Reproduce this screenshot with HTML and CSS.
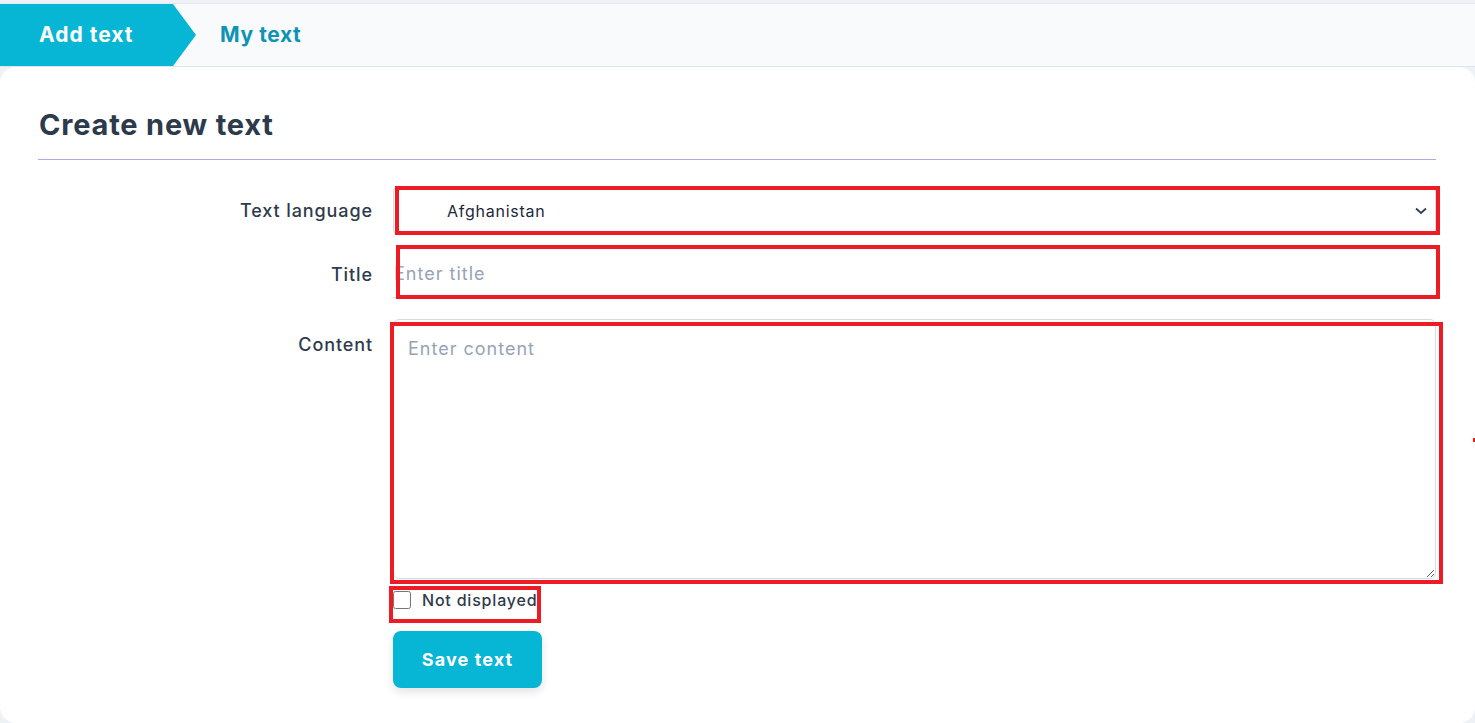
FILE: index.html
```html
<!DOCTYPE html>
<html lang="en">
<head>
<meta charset="utf-8">
<title>Create new text</title>
<link rel="stylesheet" href="styles.css">
</head>
<body>
<nav class="tabs">
  <a class="tab tab-active">Add text</a>
  <a class="tab tab-link">My text</a>
</nav>
<main class="card">
  <h1 class="title">Create new text</h1>
  <form class="form">
    <label class="label label-lang">Text language</label>
    <div class="field">
      <div class="select">
        <span class="select-value">Afghanistan</span>
        <svg class="chev" width="12" height="8" viewBox="0 0 12 8"><polyline points="1,1.5 6,6 11,1.5" fill="none" stroke="#334155" stroke-width="1.8"/></svg>
      </div>
      <span class="mark mark-select"></span>
    </div>

    <label class="label label-title">Title</label>
    <div class="field field-title">
      <input class="input" type="text" placeholder="Enter title">
      <span class="mark mark-title"></span>
    </div>

    <label class="label label-content">Content</label>
    <div class="field field-content">
      <textarea class="textarea" placeholder="Enter content"></textarea>
      <span class="mark mark-content"></span>
    </div>

    <span></span>
    <div class="field field-check">
      <label class="check"><input type="checkbox" class="checkbox"><span>Not displayed</span></label>
      <span class="mark mark-check"></span>
    </div>

    <span></span>
    <div class="field field-btn">
      <button type="button" class="btn">Save text</button>
    </div>
  </form>
  <span class="dot"></span>
</main>
</body>
</html>
```

FILE: styles.css
```css
* { box-sizing: border-box; }
html, body { margin: 0; padding: 0; }
body {
  background: #eef2f6;
  font-family: Inter, "Noto Sans", sans-serif;
  color: #334155;
  overflow: hidden;
}
.tabs {
  margin-top: 3px;
  height: 64px;
  background: #f8fafc;
  border-top: 1px solid #e5e9ef;
  border-bottom: 1px solid #dfe5ec;
  display: flex;
  align-items: stretch;
}
.tab {
  display: flex;
  align-items: center;
  font-size: 21px;
  font-weight: 700;
  text-decoration: none;
  padding-bottom: 2px;
}
.tab-active {
  width: 196px;
  padding-left: 39px;
  background: #07b6d5;
  color: #fff;
  letter-spacing: 1px;
  clip-path: polygon(0 0, 173px 0, 196px 50%, 173px 100%, 0 100%);
}
.tab-link {
  padding-left: 24px;
  color: #0e93b5;
  letter-spacing: 0.6px;
}
.card {
  position: relative;
  background: #fff;
  border-radius: 16px;
  height: 656px;
  padding: 0 39px 0 38px;
}
.title {
  margin: 0;
  padding-top: 40px;
  padding-left: 1px;
  padding-bottom: 17px;
  font-size: 29px;
  line-height: 35px;
  font-weight: 700;
  color: #2d3a4b;
  letter-spacing: 0.8px;
  border-bottom: 1px solid #b9a6de;
}
.form {
  display: grid;
  grid-template-columns: 335px 1fr;
  column-gap: 20px;
  padding-top: 27px;
}
.label {
  text-align: right;
  font-size: 18px;
  font-weight: 500;
  letter-spacing: 0.9px;
  color: #2f3b4c;
}
.label-lang { align-self: center; }
.label-title { align-self: center; margin-top: 17px; }
.label-content { margin-top: 21px; padding-top: 15px; }
.field { position: relative; }
.select {
  height: 47px;
  border: 1px solid #d3dbe5;
  border-radius: 4px;
  display: flex;
  align-items: center;
  justify-content: space-between;
  padding: 0 8px 0 53px;
  font-size: 16px;
  letter-spacing: 0.75px;
  color: #1e293b;
}
.field-title { margin-top: 16px; }
.input {
  display: block;
  width: 100%;
  height: 48px;
  border: none;
  border-bottom: 1px solid #d3dbe5;
  padding: 0 1px;
  font-family: inherit;
  font-size: 18px;
  letter-spacing: 1px;
  color: #334155;
  outline: none;
  background: transparent;
}
.input::placeholder, .textarea::placeholder { color: #97a3b6; }
.field-content { margin-top: 21px; }
.textarea {
  display: block;
  width: 100%;
  height: 260px;
  border: 1px solid #d3dbe5;
  border-radius: 6px;
  padding: 18px 14px;
  font-family: inherit;
  font-size: 18px;
  letter-spacing: 1px;
  resize: vertical;
  outline: none;
}
.field-check { margin-top: 11px; }
.check {
  display: inline-flex;
  align-items: center;
  gap: 11px;
  font-size: 16px;
  font-weight: 500;
  letter-spacing: 0.8px;
  color: #2f3b4c;
  height: 20px;
}
.checkbox {
  margin: 0;
  width: 18px;
  height: 18px;
}
.field-btn { margin-top: 18px; }
.btn {
  width: 149px;
  height: 57px;
  border: none;
  border-radius: 8px;
  background: #07b6d5;
  color: #fff;
  font-family: inherit;
  font-size: 18px;
  font-weight: 700;
  letter-spacing: 1.1px;
  box-shadow: 0 4px 8px rgba(15, 23, 42, 0.12);
}
.mark {
  position: absolute;
  border: 4px solid #ed1c24;
  pointer-events: none;
}
.mark-select { top: -1px; left: 2px; right: -4px; bottom: -1px; }
.mark-title { top: -5px; left: 3px; right: -4px; bottom: -1px; }
.mark-content { top: 3px; left: -3px; right: -7px; bottom: -5px; }
.mark-check { top: -4px; left: -4px; width: 152px; bottom: -10px; }
.dot {
  position: absolute;
  right: 0;
  top: 371px;
  width: 2px;
  height: 4px;
  background: #ed1c24;
}
```
